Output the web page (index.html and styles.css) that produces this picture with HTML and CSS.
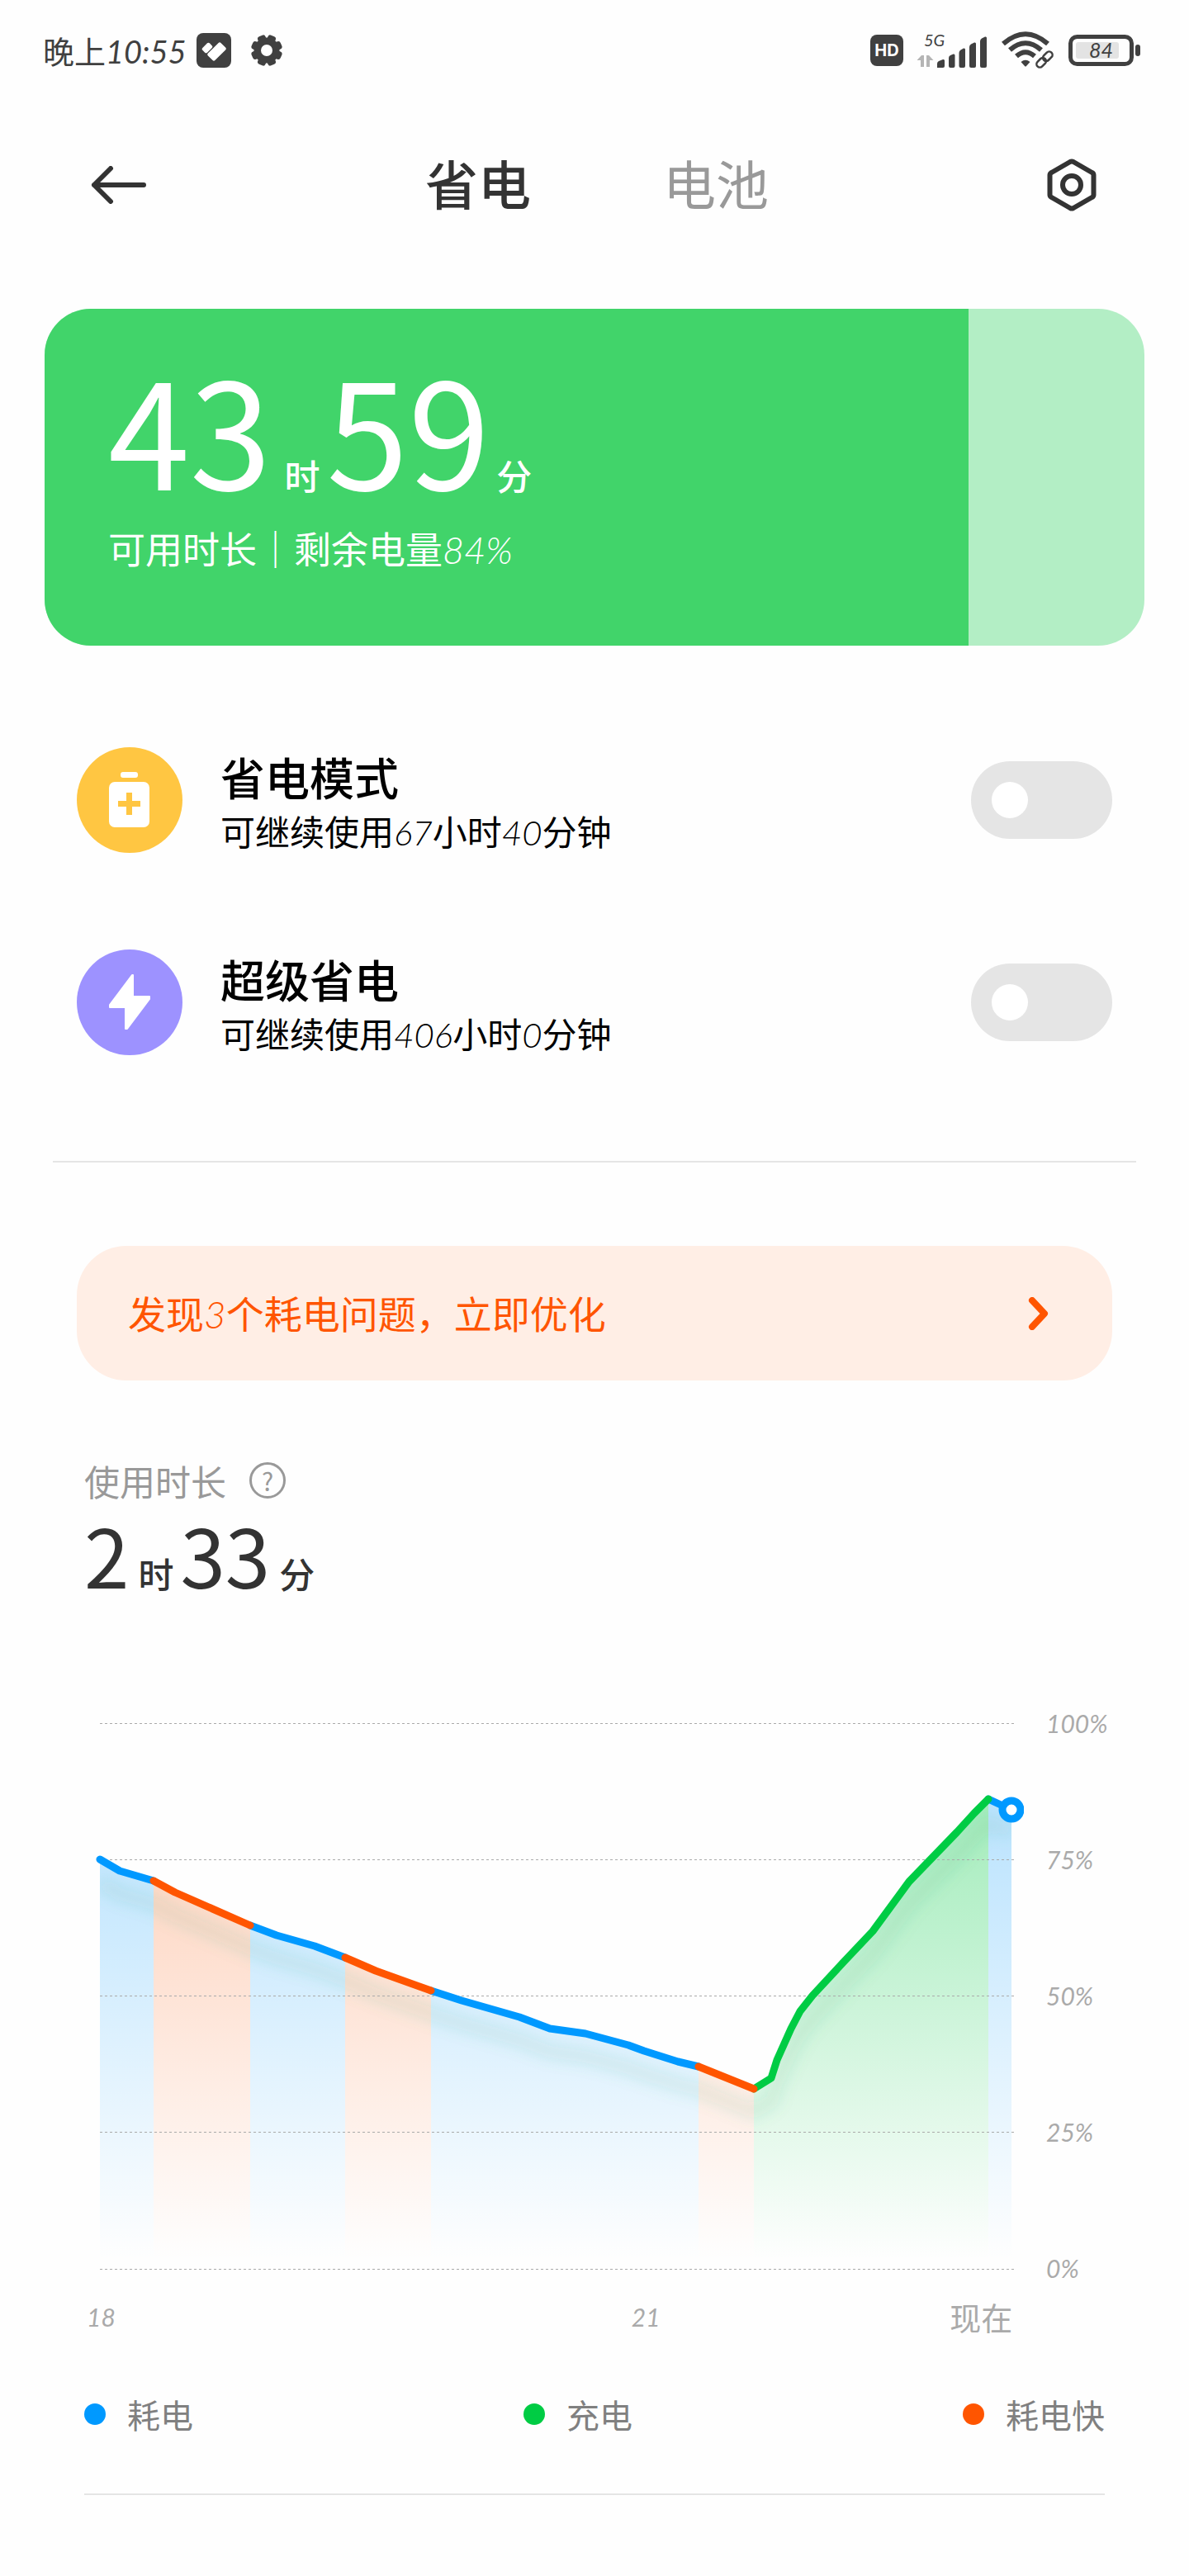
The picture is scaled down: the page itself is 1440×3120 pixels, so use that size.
FILE: index.html
```html
<!DOCTYPE html>
<html lang="zh-CN">
<head>
<meta charset="utf-8">
<meta name="viewport" content="width=device-width, initial-scale=1">
<title>省电</title>
<link rel="stylesheet" href="styles.css">
</head>
<body>
<div class="status-bar">
  <span class="clock">晚上<span class="num">10:55</span></span>
  <svg class="icon-app" width="42" height="42" viewBox="0 0 42 42" aria-hidden="true">
    <rect width="42" height="42" rx="8" fill="#404040"/>
    <g fill="#fff">
      <rect x="-6" y="-4" width="12" height="8" rx="2" transform="translate(13 18) rotate(-45)"/>
      <rect x="-11" y="-6" width="22" height="12" rx="2" transform="translate(24.500 22.500) rotate(-45)"/>
    </g>
  </svg>
  <svg class="icon-gear" width="38" height="38" viewBox="-19 -19 38 38" aria-hidden="true">
    <g fill="#404040">
      <circle r="15.500"/>
      <rect x="-5" y="-19" width="10" height="38" rx="3" transform="rotate(22.500)"/>
      <rect x="-5" y="-19" width="10" height="38" rx="3" transform="rotate(67.500)"/>
      <rect x="-5" y="-19" width="10" height="38" rx="3" transform="rotate(112.500)"/>
      <rect x="-5" y="-19" width="10" height="38" rx="3" transform="rotate(157.500)"/>
    </g>
    <circle r="7" fill="#fff"/>
  </svg>
  <div class="status-right">
    <span class="hd">HD</span>
    <svg width="86" height="48" viewBox="0 -2 86 48" aria-hidden="true">
      <text x="9" y="17" class="svg-num" font-size="20">5G</text>
      <g fill="#b5b5b5">
        <path d="M5 42V34H0.500L6 28V28H9V42Z"/>
        <path d="M12 42V28H15L20.500 34H16V42Z"/>
      </g>
      <g fill="#404040">
        <path d="M25 43V38Q25 36 27 35L32 33Q34 32.500 34 34.500V41Q34 43 32 43Z"/>
        <path d="M39 43V31Q39 29 41 28L44.500 26.500Q46.500 26 46.500 28V41Q46.500 43 44.500 43H41Q39 43 39 41Z"/>
        <path d="M51.500 41V25Q51.500 22.500 53.500 21.500L57 19.500Q59 19 59 21V41Q59 43 57 43H53.500Q51.500 43 51.500 41Z"/>
        <path d="M64 41V18Q64 15.500 66 14.500L70 12.500Q72 12 72 14V41Q72 43 70 43H66Q64 43 64 41Z"/>
        <path d="M77 41V11Q77 8.500 79 7.500L83 5.500Q85 5 85 7V41Q85 43 83 43H79Q77 43 77 41Z"/>
      </g>
    </svg>
    <svg width="66" height="46" viewBox="0 0 66 46" fill="none" aria-hidden="true">
      <g stroke="#404040" stroke-width="6">
        <path d="M3 15Q30 -8.500 57 15"/>
        <path d="M11 22.500Q30 6 49 22.500"/>
        <path d="M19 30Q30 20.500 41 30"/>
      </g>
      <path d="M24.500 37Q30 32.500 35.500 37L31 42Q30 43 29 42Z" fill="#404040"/>
      <g stroke="#404040" stroke-width="2.500">
        <rect x="-7" y="-4" width="13" height="8" rx="4" transform="translate(49.500 37.500) rotate(-45)"/>
        <rect x="-6" y="-4" width="13" height="8" rx="4" transform="translate(56.500 30.500) rotate(-45)"/>
      </g>
    </svg>
    <svg width="88" height="38" viewBox="0 0 88 38" aria-hidden="true">
      <rect x="2.500" y="2.500" width="74" height="33" rx="8" fill="none" stroke="#404040" stroke-width="5"/>
      <rect x="9" y="9" width="52" height="20" rx="3" fill="#e3e3e3"/>
      <rect x="81" y="12" width="6" height="14" rx="3" fill="#404040"/>
      <text x="25" y="28" class="svg-num" font-size="25">84</text>
    </svg>
  </div>
</div>

<header class="header">
  <button class="icon-button" aria-label="返回">
    <svg width="68" height="46" viewBox="0 0 68 46" fill="none" stroke="#333" stroke-width="6" stroke-linecap="round" stroke-linejoin="round">
      <path d="M24 3L4 23L24 43M4 23H64"/>
    </svg>
  </button>
  <nav class="tabs">
    <button class="tab tab-active">省电</button>
    <button class="tab">电池</button>
  </nav>
  <button class="icon-button" aria-label="设置">
    <svg width="60" height="64" viewBox="0 0 60 64" fill="none" stroke="#333" stroke-width="6" stroke-linejoin="round">
      <path d="M28 4Q30 3 32 4L54.500 17Q56.500 18 56.500 20V44Q56.500 46 54.500 47L32 60Q30 61 28 60L5.500 47Q3.500 46 3.500 44V20Q3.500 18 5.500 17Z"/>
      <circle cx="30" cy="32" r="11"/>
    </svg>
  </button>
</header>

<main>
  <section class="battery-card">
    <div class="battery-level" style="width: 84%"></div>
    <div class="battery-info">
      <p class="remaining"><span class="digits">43</span><span class="unit">时</span><span class="digits">59</span><span class="unit">分</span></p>
      <p class="remaining-note">可用时长｜剩余电量<span class="num">84%</span></p>
    </div>
  </section>

  <section class="modes">
    <div class="mode">
      <svg width="128" height="128" viewBox="0 0 128 128" aria-hidden="true">
        <circle cx="64" cy="64" r="64" fill="#ffc642"/>
        <rect x="53" y="30" width="21" height="7" rx="3" fill="#fff"/>
        <rect x="39" y="42" width="49" height="55" rx="7" fill="#fff"/>
        <path d="M63.500 55V82M50 68.500H77" stroke="#ffc642" stroke-width="7"/>
      </svg>
      <label class="mode-text" for="saver"><span class="mode-title">省电模式</span><span class="mode-note">可继续使用<span class="num">67</span>小时<span class="num">40</span>分钟</span></label>
      <input class="switch" type="checkbox" role="switch" id="saver">
    </div>
    <div class="mode">
      <svg width="128" height="128" viewBox="0 0 128 128" aria-hidden="true">
        <circle cx="64" cy="64" r="64" fill="#9d92ff"/>
        <path d="M67 31L40 67V70H59V96H61L88 60V57H68V31Z" fill="#fff" stroke="#fff" stroke-width="2" stroke-linejoin="round"/>
      </svg>
      <label class="mode-text" for="ultra"><span class="mode-title">超级省电</span><span class="mode-note">可继续使用<span class="num">406</span>小时<span class="num">0</span>分钟</span></label>
      <input class="switch" type="checkbox" role="switch" id="ultra">
    </div>
  </section>

  <hr class="divider">

  <a class="notice" href="#optimize">
    <span>发现<span class="num">3</span>个耗电问题，立即优化</span>
    <svg width="26" height="40" viewBox="0 0 26 40" fill="none" stroke="#ff5500" stroke-width="8" stroke-linecap="round" stroke-linejoin="round" aria-hidden="true">
      <path d="M5 4L20 20L5 36"/>
    </svg>
  </a>

  <section class="usage">
    <h2 class="usage-title">使用时长 <button class="help" aria-label="说明">?</button></h2>
    <p class="usage-value"><span class="digits">2</span><span class="unit">时</span><span class="digits">33</span><span class="unit">分</span></p>

    <div class="chart">
      <svg class="plot" viewBox="0 0 1138 700" aria-hidden="true">
        <defs>
          <linearGradient id="blue" gradientUnits="userSpaceOnUse" x1="0" y1="112" x2="0" y2="670">
            <stop offset="0" stop-color="#0099ff" stop-opacity=".27"/><stop offset="1" stop-color="#0099ff" stop-opacity="0"/>
          </linearGradient>
          <linearGradient id="orange" gradientUnits="userSpaceOnUse" x1="0" y1="112" x2="0" y2="670">
            <stop offset="0" stop-color="#ff5500" stop-opacity=".27"/><stop offset="1" stop-color="#ff5500" stop-opacity="0"/>
          </linearGradient>
          <linearGradient id="green" gradientUnits="userSpaceOnUse" x1="0" y1="112" x2="0" y2="670">
            <stop offset="0" stop-color="#00cc44" stop-opacity=".36"/><stop offset="1" stop-color="#00cc44" stop-opacity="0"/>
          </linearGradient>
          <clipPath id="area">
            <path d="M19 185L43 199L84 211L110 225L201 265L233 277L279 290L316 304L353 320L420 344L457 356L527 376L564 390L607 396L659 410L678 417L719 430L744 436L811 463L832 450L839 428L856 390L867 369L882 350L920 309L955 272L999 212L1057 152L1078 129L1095 112L1123 125V681H19Z"/>
          </clipPath>
          <filter id="soft" x="-10%" y="-10%" width="120%" height="120%"><feGaussianBlur stdDeviation="9"/></filter>
        </defs>
        <g clip-path="url(#area)">
          <path fill="url(#blue)" d="M19 100H84V681H19ZM201 100H316V681H201ZM420 100H744V681H420ZM1095 100H1123V681H1095Z"/>
          <path fill="url(#orange)" d="M84 100H201V681H84ZM316 100H420V681H316ZM744 100H811V681H744Z"/>
          <path fill="url(#green)" d="M811 100H1095V681H811Z"/>
          <path transform="translate(0 28)" filter="url(#soft)" fill="none" stroke="#2fa070" stroke-opacity=".12" stroke-width="16" d="M19 185L43 199L84 211L110 225L201 265L233 277L279 290L316 304L353 320L420 344L457 356L527 376L564 390L607 396L659 410L678 417L719 430L744 436L811 463L832 450L839 428L856 390L867 369L882 350L920 309L955 272L999 212L1057 152L1078 129L1095 112L1123 125"/>
        </g>
        <path stroke="#aaa" stroke-width="1" stroke-dasharray="3 3" shape-rendering="crispEdges" d="M19 20.500H1126M19 185.500H1126M19 350.500H1126M19 515.500H1126M19 681.500H1126"/>
        <g fill="none" stroke-width="9" stroke-linecap="round" stroke-linejoin="round">
          <path stroke="#0099ff" d="M19 185L43 199L84 211M201 265L233 277L279 290L316 304M420 344L457 356L527 376L564 390L607 396L659 410L678 417L719 430L744 436M1095 112L1123 125"/>
          <path stroke="#00cc44" d="M811 463L832 450L839 428L856 390L867 369L882 350L920 309L955 272L999 212L1057 152L1078 129L1095 112"/>
          <path stroke="#ff5500" d="M84 211L110 225L201 265M316 304L353 320L420 344M744 436L811 463"/>
        </g>
        <circle cx="1123" cy="125" r="11" fill="#fff" stroke="#0099ff" stroke-width="9"/>
      </svg>
      <div class="y-axis num"><span>100%</span><span>75%</span><span>50%</span><span>25%</span><span>0%</span></div>
      <div class="x-axis"><span class="num">18</span><span class="num">21</span><span class="now">现在</span></div>
    </div>

    <ul class="legend">
      <li><i class="dot dot-blue"></i>耗电</li>
      <li><i class="dot dot-green"></i>充电</li>
      <li><i class="dot dot-orange"></i>耗电快</li>
    </ul>
    <hr class="rule">
  </section>
</main>
</body>
</html>
```
FILE: styles.css
```css
* {
  box-sizing: border-box;
}

body {
  margin: 0;
  background: #fefefe;
  color: #333;
  font-family: "Noto Sans CJK SC", sans-serif;
}

p,
h2,
ul,
hr {
  margin: 0;
  padding: 0;
  border: 0;
}

button {
  padding: 0;
  border: 0;
  background: none;
  color: inherit;
  font-family: inherit;
}

svg {
  display: block;
  flex: none;
}

.num,
.svg-num {
  font-family: Lato, "Noto Sans CJK SC", sans-serif;
  font-style: italic;
  font-weight: 300;
}

.clock .num,
.svg-num,
.x-axis .num,
.y-axis {
  font-weight: 400;
}

.svg-num {
  fill: #404040;
}

/* Status bar */
.status-bar {
  display: flex;
  align-items: center;
  height: 122px;
  padding: 0 58px 0 52px;
  color: #404040;
}

.clock {
  font-size: 38px;
  line-height: 44px;
}

.icon-app {
  margin-left: 12px;
}

.icon-gear {
  margin-left: 24px;
}

.status-right {
  display: flex;
  align-items: center;
  gap: 16px;
  margin-left: auto;
}

.hd {
  width: 40px;
  border-radius: 8px;
  background: #404040;
  color: #fff;
  font: 700 20px/38px Inter, sans-serif;
  text-align: center;
}

/* Header */
.header {
  display: flex;
  align-items: center;
  justify-content: space-between;
  height: 204px;
  padding: 0 112px 0 110px;
}

.tabs {
  display: flex;
  gap: 160px;
  padding-bottom: 8px;
}

.tab {
  color: #999;
  font-size: 64px;
  line-height: 80px;
}

.tab-active {
  color: #333;
  font-weight: 500;
}

/* Battery card */
.battery-card {
  display: grid;
  height: 408px;
  margin: 48px 54px 0;
  border-radius: 56px;
  background: #b3eec5;
  overflow: hidden;
}

.battery-level,
.battery-info {
  grid-area: 1 / 1;
}

.battery-level {
  background: #41d46a;
}

.battery-info {
  padding: 45px 77px 0;
  color: #fff;
}

.unit {
  font-size: 43px;
  font-weight: 500;
  line-height: 60px;
}

.remaining {
  display: flex;
  align-items: baseline;
  font-size: 178px;
  line-height: 196px;
}

.remaining .unit {
  margin: 0 8px 0 16px;
}

.remaining .unit:last-child {
  margin: 0 0 0 8px;
}

.remaining-note {
  margin-top: 10px;
  font-size: 45px;
  line-height: 78px;
}

/* Power modes */
.modes {
  margin-top: 64px;
  padding: 0 93px;
}

.mode {
  display: flex;
  align-items: center;
  height: 245px;
}

.mode-text {
  display: flex;
  flex: 1;
  flex-direction: column;
  padding-left: 46px;
  color: #000;
}

.mode-title {
  font-size: 54px;
  font-weight: 500;
  line-height: 76px;
}

.mode-note {
  font-size: 42px;
  line-height: 54px;
}

.switch {
  width: 171px;
  height: 94px;
  margin: 0;
  padding: 25px;
  border-radius: 47px;
  background: #e5e5e5;
  appearance: none;
}

.switch::before {
  display: block;
  width: 44px;
  height: 44px;
  border-radius: 50%;
  background: #fff;
  content: "";
}

.switch:checked {
  background: #41d46a;
}

.switch:checked::before {
  margin-left: auto;
}

.divider {
  height: 2px;
  margin: 70px 64px 0;
  background: #e5e5e5;
}

/* Notice */
.notice {
  display: flex;
  align-items: center;
  justify-content: space-between;
  height: 163px;
  margin: 101px 93px 0;
  padding: 0 76px 0 62px;
  border-radius: 60px;
  background: #ffeee5;
  color: #ff5500;
  font-size: 46px;
  text-decoration: none;
}

.notice > span {
  padding-bottom: 4px;
}

/* Usage */
.usage {
  padding: 91px 102px 98px;
}

.usage-title {
  display: flex;
  align-items: center;
  gap: 28px;
  color: #999;
  font-size: 43px;
  font-weight: 400;
  line-height: 60px;
}

.help {
  width: 44px;
  height: 44px;
  border: 3px solid #999;
  border-radius: 50%;
  font-size: 30px;
  line-height: 38px;
}

.usage-value {
  display: flex;
  align-items: baseline;
  font-size: 98px;
  line-height: 116px;
}

.usage-value .unit {
  margin: 0 8px 0 11px;
}

.chart {
  display: grid;
  grid-template-columns: 1fr 71px;
  column-gap: 27px;
  margin-top: 128px;
}

.plot {
  width: 100%;
}

.y-axis {
  display: flex;
  flex-direction: column;
  justify-content: space-between;
  color: #aaa;
  font-size: 30px;
  line-height: 40px;
}

.x-axis {
  display: grid;
  grid-template-columns: 661fr 386fr 78fr;
  align-items: center;
  padding: 14px 12px 0 3px;
  color: #aaa;
  font-size: 30px;
  line-height: 50px;
}

.now {
  font-size: 38px;
}

.legend {
  display: flex;
  justify-content: space-between;
  margin-top: 63px;
  color: #808080;
  font-size: 40px;
  line-height: 60px;
  list-style: none;
}

.legend li {
  display: flex;
  align-items: center;
  gap: 26px;
}

.dot {
  width: 26px;
  height: 26px;
  border-radius: 50%;
}

.dot-blue {
  background: #0099ff;
}

.dot-green {
  background: #00cc44;
}

.dot-orange {
  background: #ff5500;
}

.rule {
  height: 2px;
  margin-top: 66px;
  background: #e5e5e5;
}
```
